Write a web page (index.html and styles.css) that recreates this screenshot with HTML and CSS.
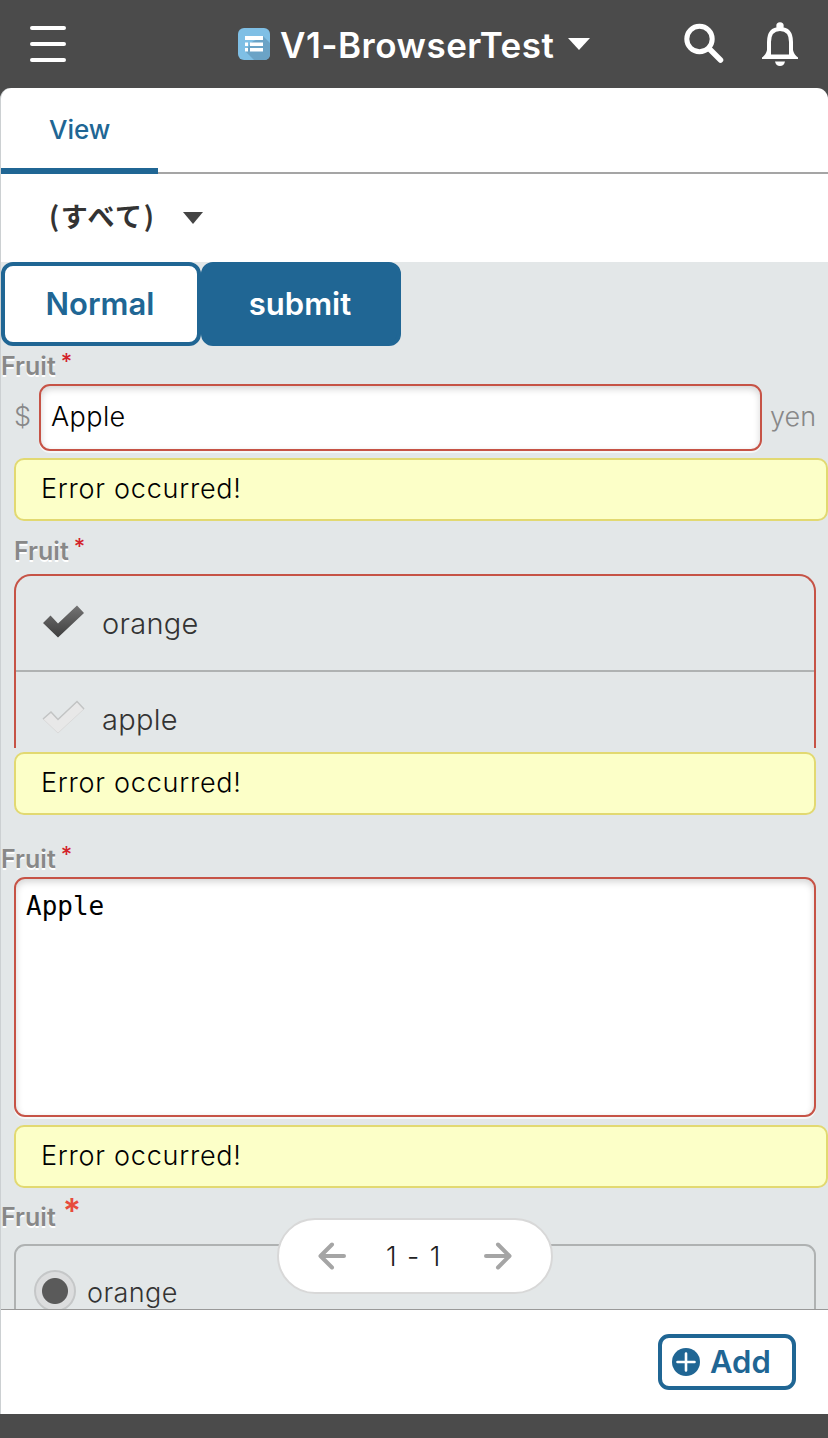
FILE: index.html
```html
<!DOCTYPE html>
<html lang="ja">
<head>
<meta charset="utf-8">
<title>V1-BrowserTest</title>
<link rel="stylesheet" href="styles.css">
</head>
<body>
<div class="app">
  <header class="header">
    <svg class="menu" width="36" height="36" viewBox="0 0 36 36"><path d="M2 2H34M2 18H34M2 34H34" stroke="#fff" stroke-width="4" stroke-linecap="round"/></svg>
    <div class="title">
      <svg width="32" height="32" viewBox="0 0 32 32"><rect width="32" height="32" rx="6" fill="#7fbfe5"/><path d="M25 8L32 15V26Q32 32 26 32H16L7 23L14 14Z" fill="#6ba3c6"/><path d="M7 8H25V12H7ZM7 14.500H10V18H7ZM12 14.500H25V18H12ZM7 20H10V23.500H7ZM12 20H25V23.500H12Z" fill="#fff"/></svg>
      <h1 class="title-text">V1-BrowserTest</h1>
      <svg width="22" height="12" viewBox="0 0 22 12"><path d="M0 0H22L11 12Z" fill="#fff"/></svg>
    </div>
    <div class="actions">
      <svg width="42" height="42" viewBox="0 0 42 42" fill="none" stroke="#fff"><circle cx="16.500" cy="16" r="12.700" stroke-width="5"/><path d="M26 25.500L37.500 37" stroke-width="5.500" stroke-linecap="round"/></svg>
      <svg width="36" height="44" viewBox="0 0 36 44"><path d="M7 33V20C7 11 11 7 18 7S29 11 29 20V33" fill="none" stroke="#fff" stroke-width="4"/><circle cx="18" cy="4" r="3.700" fill="#fff"/><path d="M5 28Q4 33 0 35.500V37H36V35.500Q32 33 31 28L29 32.500H7ZM13 39.500H23Q22 44 18 44T13 39.500Z" fill="#fff"/></svg>
    </div>
  </header>
  <main class="panel">
    <nav class="tabs"><span class="tab">View</span></nav>
    <div class="selector"><span class="selector-text">(すべて)</span><svg width="20" height="12" viewBox="0 0 20 12"><path d="M0 0H20L10 12Z" fill="#444"/></svg></div>
    <div class="content">
      <div class="buttons"><button class="btn">Normal</button><button class="btn btn-submit">submit</button></div>
      <div class="label label-first">Fruit<span class="star">*</span></div>
      <div class="input-row"><span class="unit">$</span><div class="input">Apple</div><span class="unit unit-after">yen</span></div>
      <div class="error">Error occurred!</div>
      <div class="label label-inset">Fruit<span class="star">*</span></div>
      <div class="checks">
        <div class="check"><svg width="44" height="36" viewBox="0 0 44 36"><defs><linearGradient id="dark" x2="0" y2="1"><stop stop-color="#747474"/><stop offset="1" stop-color="#3e3e3e"/></linearGradient></defs><path d="M1 19L8.500 11.500L16 19.500L35 1.500L42 9L16 33.500Z" fill="url(#dark)"/></svg><span>orange</span></div>
        <div class="check"><svg width="44" height="36" viewBox="0 0 44 36"><path d="M1 19L9 12L16 19.500L35 1.500L42 9L16 33Z" fill="#e8e8e8" stroke="#dadada"/><path d="M1 19L9 12L16 19.500L35 1.500L42 9" fill="none" stroke="#c2c4c4" stroke-width="1.500"/></svg><span>apple</span></div>
      </div>
      <div class="error error-narrow">Error occurred!</div>
      <div class="label label-area">Fruit<span class="star">*</span></div>
      <div class="textarea">Apple</div>
      <div class="error">Error occurred!</div>
      <div class="label label-radio">Fruit<span class="star star-big">*</span></div>
      <div class="radios"><span class="radio"></span><span class="radio-text">orange</span></div>
      <div class="pager">
        <svg width="28" height="28" viewBox="0 0 28 28"><path d="M26 14H3M14 2.500L2.500 14L14 25.500" fill="none" stroke="#a5a5a5" stroke-width="4" stroke-linecap="round" stroke-linejoin="round"/></svg>
        <span class="pager-text">1 - 1</span>
        <svg width="28" height="28" viewBox="0 0 28 28"><path d="M2 14H25M14 2.500L25.500 14L14 25.500" fill="none" stroke="#a5a5a5" stroke-width="4" stroke-linecap="round" stroke-linejoin="round"/></svg>
      </div>
    </div>
    <footer class="footer"><button class="add"><svg width="28" height="28" viewBox="0 0 28 28"><circle cx="14" cy="14" r="14" fill="#206694"/><path d="M5.500 14H22.500M14 5.500V22.500" stroke="#fff" stroke-width="2.600" stroke-linecap="round"/></svg><span>Add</span></button></footer>
  </main>
</div>
</body>
</html>
```
FILE: styles.css
```css
* { box-sizing: border-box; }
body { margin: 0; background: #4b4b4b; font-family: Inter, "Noto Sans CJK JP", sans-serif; font-weight: 300; font-size: 27px; color: #333; }
svg { display: block; flex: none; }
.app { width: 828px; height: 1438px; overflow: hidden; }
.header { height: 88px; display: grid; grid-template-columns: 1fr auto 1fr; align-items: center; padding: 0 30px; color: #fff; }
.title { display: flex; align-items: center; gap: 10px; }
.title-text { margin: 0; width: 278px; font-size: 35px; font-weight: 600; line-height: 44px; padding-top: 1px; white-space: nowrap; letter-spacing: 0.5px; }
.actions { display: flex; align-items: center; justify-content: flex-end; gap: 37px; }
.panel { height: 1326px; background: #fff; border-left: 1px solid #ccd0d2; border-radius: 11px 11px 0 0; overflow: hidden; }
.tabs { height: 86px; border-bottom: 2px solid #a5a5a5; }
.tab { display: block; width: 157px; height: 86px; border-bottom: 6px solid #206694; padding-left: 48px; color: #206694; font-size: 26px; font-weight: 500; line-height: 83px; }
.selector { height: 88px; padding-left: 48px; display: flex; align-items: center; gap: 28px; }
.selector-text { width: 106px; font-family: "Noto Sans CJK JP", sans-serif; font-size: 27px; font-weight: 600; line-height: 40px; letter-spacing: 1.6px; margin-top: -4px; white-space: nowrap; }
.content { position: relative; height: 1047px; overflow: hidden; background: #e3e7e8; }
.buttons { display: flex; height: 84px; }
.btn { width: 200px; height: 84px; padding: 0 2px 2px 0; border: 4px solid #206694; border-radius: 12px; background: #fff; color: #206694; font: 600 31px Inter, sans-serif; }
.btn-submit { background: #206694; color: #fff; }
.label { display: flex; color: #888; font-size: 25px; font-weight: 600; line-height: 40px; height: 38px; text-shadow: 0 2px 0 #fff; }
.star { margin: -5px 0 0 5px; color: #d3232b; font-size: 22px; font-weight: 500; text-shadow: none; }
.star-big { margin: -6px 0 0 7px; color: #e74c3c; font-size: 34px; font-weight: 600; }
.label-inset { margin: 10px 0 5px 13px; }
.label-area { margin-top: 24px; }
.label-radio { margin: 9px 0 9px; }
.input-row { display: flex; height: 67px; line-height: 65px; padding: 0 12px 0 13px; color: #888; }
.unit { width: 25px; }
.unit-after { width: 54px; padding-left: 8px; }
.input { flex: 1; padding-left: 10px; border: 2px solid #c65346; border-radius: 11px; background: #fff; color: #000; line-height: 62px; letter-spacing: 0.4px; box-shadow: 0 2px 0 #f5f7f7, inset 0 3px 7px #d5d5d5; }
.error { height: 63px; margin: 7px 0 0 13px; padding-left: 25px; border: 2px solid #e2d971; border-radius: 10px; background: #fcffc8; color: #000; line-height: 57px; letter-spacing: 0.75px; }
.error-narrow { margin: 4px 12px 0 13px; }
.checks { height: 174px; margin: 0 12px 0 13px; border: 2px solid #c65346; border-bottom: 0; border-radius: 17px 17px 0 0; overflow: hidden; font-size: 29px; letter-spacing: 0.3px; }
.check { height: 96px; display: flex; align-items: center; gap: 16px; padding: 0 0 2px 26px; border-bottom: 2px solid #afb2b2; line-height: 40px; }
.check span { margin-top: 4px; }
.textarea { height: 240px; margin: 0 12px 8px 13px; padding: 8px 10px; border: 2px solid #c65346; border-radius: 11px; background: #fff; color: #000; font: 400 26px/38px "DejaVu Sans Mono", monospace; box-shadow: 0 2px 0 #f5f7f7, inset 0 3px 7px #d5d5d5; }
.radios { display: flex; align-items: flex-start; gap: 11px; height: 140px; margin: 0 12px 0 13px; padding: 24px 0 0 18px; border: 2px solid #afb2b2; border-radius: 11px; }
.radio { width: 42px; height: 42px; border: 2px solid #c5c7c8; border-radius: 50%; background: radial-gradient(circle, #5a5a5a 12.500px, #dcddde 13.500px); }
.radio-text { margin-top: 3px; line-height: 40px; letter-spacing: 0.4px; }
.pager { position: absolute; left: 276px; top: 956px; width: 276px; height: 76px; border: 2px solid #d8d8d8; border-radius: 38px; background: #fff; display: flex; align-items: center; justify-content: space-between; padding: 0 39px; color: #222; }
.pager-text { width: 58px; white-space: nowrap; letter-spacing: 1.4px; }
.footer { height: 105px; border-top: 1px solid #999; display: flex; align-items: center; justify-content: flex-end; padding-right: 32px; }
.add { width: 138px; height: 56px; border: 4px solid #206694; border-radius: 11px; background: #fff; color: #206694; display: flex; align-items: center; gap: 10px; padding: 0 0 0 10px; font: 600 31px/40px Inter, sans-serif; }
```
